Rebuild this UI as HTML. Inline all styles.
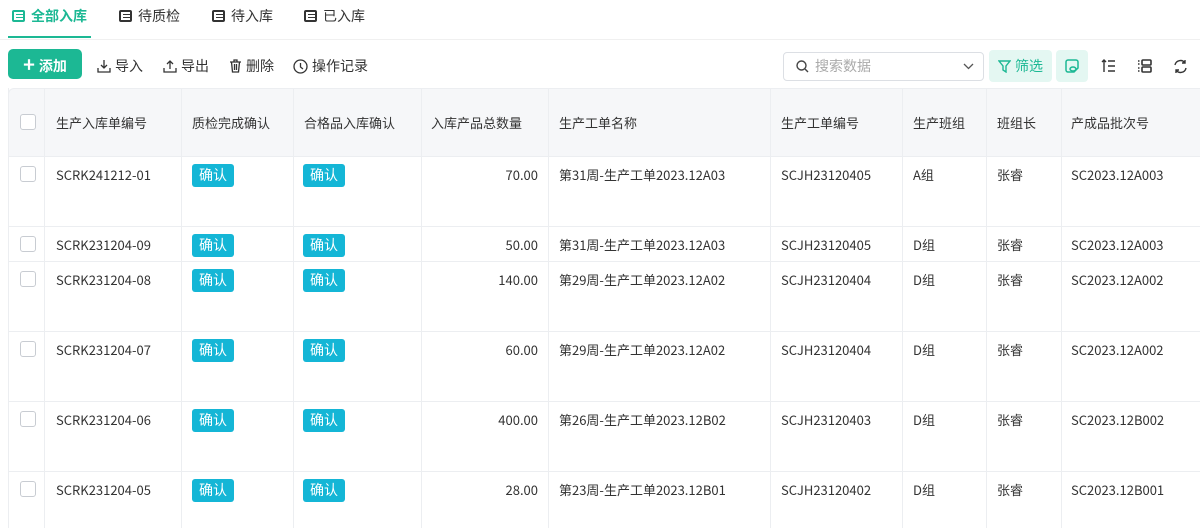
<!DOCTYPE html>
<html><head><meta charset="utf-8"><style>
*{margin:0;padding:0;box-sizing:border-box}
body{width:1200px;height:528px;overflow:hidden;background:#fff;font-family:"Noto Sans CJK SC","Liberation Sans",sans-serif;color:#333;font-size:13px;position:relative}
.a{position:absolute}
.tab{position:absolute;top:6px;font-size:14px;line-height:20px;color:#333;display:flex;align-items:center;gap:6px}
.ti{width:13px;height:12px;border:2px solid #333;border-radius:2px;position:relative;color:#333}
.ti:before{content:"";position:absolute;left:2px;right:0;top:1.5px;height:1.5px;background:currentColor;box-shadow:0 3px 0 currentColor}
.tb{position:absolute;top:56px;font-size:14px;line-height:20px;color:#333;display:flex;align-items:center;gap:4px}
.cell{position:absolute;font-size:13px;line-height:18px;color:#333}
.badge{position:absolute;background:#14b6d6;color:#fff;font-size:14px;border-radius:3px;width:42px;height:23px;line-height:23px;text-align:center}
.cb{position:absolute;left:20px;width:16px;height:16px;border:1px solid #c8ccd2;border-radius:3px;background:#fff}
.vl{position:absolute;width:1px;background:#eceef1}
.hl{position:absolute;left:8px;right:0;height:1px;background:#eceef1}
</style></head><body>
<div class="tab" style="left:12px;color:#1cb894;font-weight:bold"><span class="ti" style="border-color:#1cb894;color:#1cb894"></span>全部入库</div>
<div class="tab" style="left:119px"><span class="ti"></span>待质检</div>
<div class="tab" style="left:212px"><span class="ti"></span>待入库</div>
<div class="tab" style="left:304px"><span class="ti"></span>已入库</div>
<div class="a" style="left:8px;top:36px;width:83px;height:2px;background:#1cb894"></div>
<div class="a" style="left:0;top:39px;width:1200px;height:1px;background:#f0f0f0"></div>

<div class="a" style="left:8px;top:49px;width:74px;height:30px;background:#1cb894;border-radius:5px;color:#fff;font-size:14px;line-height:30px;text-align:center;font-weight:bold"><span style="font-size:20px;vertical-align:-1px;margin-right:4px">+</span>添加</div>
<div class="tb" style="left:97px"><svg width="14" height="14" viewBox="0 0 14 14" fill="none" stroke="#333" stroke-width="1.3"><path d="M7 1v8M4 6l3 3 3-3M1 9v4h12V9"/></svg>导入</div>
<div class="tb" style="left:163px"><svg width="14" height="14" viewBox="0 0 14 14" fill="none" stroke="#333" stroke-width="1.3"><path d="M7 10V2M4 5l3-3 3 3M1 9v4h12V9"/></svg>导出</div>
<div class="tb" style="left:229px"><svg width="13" height="14" viewBox="0 0 13 14" fill="none" stroke="#333" stroke-width="1.3"><path d="M1 3h11M5 3V1h3v2M2.5 3l1 10h6l1-10M5.5 5v6M7.5 5v6"/></svg>删除</div>
<div class="tb" style="left:293px"><svg width="15" height="15" viewBox="0 0 15 15" fill="none" stroke="#333" stroke-width="1.3"><circle cx="7.5" cy="7.5" r="6.5"/><path d="M7.5 4v4l2.5 2"/></svg>操作记录</div>

<div class="a" style="left:783px;top:52px;width:201px;height:29px;border:1px solid #dcdfe4;border-radius:4px"></div>
<svg class="a" style="left:796px;top:60px" width="13" height="13" viewBox="0 0 13 13" fill="none" stroke="#444" stroke-width="1.4"><circle cx="5.5" cy="5.5" r="4.5"/><path d="M9 9l3 3"/></svg>
<div class="a" style="left:815px;top:56px;font-size:14px;line-height:20px;color:#aaa">搜索数据</div>
<svg class="a" style="left:963px;top:63px" width="11" height="7" viewBox="0 0 11 7" fill="none" stroke="#555" stroke-width="1.3"><path d="M1 1l4.5 4.5L10 1"/></svg>
<div class="a" style="left:989px;top:50px;width:63px;height:32px;background:#e4f7f2;border-radius:4px;color:#1cb894;font-size:14px;line-height:32px;padding-left:26px">筛选</div>
<svg class="a" style="left:998px;top:60px" width="13" height="13" viewBox="0 0 13 13" fill="none" stroke="#1cb894" stroke-width="1.4"><path d="M1 1h11L8 6v6L5 10V6z"/></svg>
<div class="a" style="left:1056px;top:50px;width:32px;height:32px;background:#e4f7f2;border-radius:4px"></div>
<svg class="a" style="left:1065px;top:59px" width="14" height="14" viewBox="0 0 14 14" fill="none" stroke="#1cb894" stroke-width="1.5"><path d="M3 1h8a2 2 0 0 1 2 2v6l-4 4H3a2 2 0 0 1-2-2V3a2 2 0 0 1 2-2z"/><ellipse cx="8" cy="10" rx="3" ry="2"/></svg>
<svg class="a" style="left:1101px;top:59px" width="15" height="14" viewBox="0 0 15 14" fill="none" stroke="#333" stroke-width="1.4"><path d="M3 13V1M1 3l2-2 2 2M7 2h7M7 7h7M7 12h7"/></svg>
<svg class="a" style="left:1137px;top:59px" width="15" height="14" viewBox="0 0 15 14" fill="none" stroke="#333" stroke-width="1.6"><path d="M1 2h1.5M1 5h1.5M1 9h1.5M1 12h1.5"/><rect x="5" y="1" width="9" height="5" rx="1"/><rect x="5" y="8" width="9" height="5" rx="1"/></svg>
<svg class="a" style="left:1173px;top:59px" width="15" height="15" viewBox="0 0 15 15" fill="none" stroke="#333" stroke-width="1.4"><path d="M2 6a5.5 5.5 0 0 1 10-2M13 9a5.5 5.5 0 0 1-10 2M12 1v3H9M3 14v-3h3"/></svg>

<div class="a" style="left:8px;top:88px;width:1200px;height:69px;background:#f6f7f9;border-top:1px solid #eceef1;border-left:1px solid #eceef1;border-radius:6px 0 0 0"></div>
<div class="vl" style="left:8px;top:88px;height:440px"></div>
<div class="vl" style="left:44px;top:88px;height:440px"></div>
<div class="vl" style="left:181px;top:88px;height:440px"></div>
<div class="vl" style="left:293px;top:88px;height:440px"></div>
<div class="vl" style="left:421px;top:88px;height:440px"></div>
<div class="vl" style="left:548px;top:88px;height:440px"></div>
<div class="vl" style="left:770px;top:88px;height:440px"></div>
<div class="vl" style="left:902px;top:88px;height:440px"></div>
<div class="vl" style="left:986px;top:88px;height:440px"></div>
<div class="vl" style="left:1061px;top:88px;height:440px"></div>
<div class="hl" style="top:156px"></div>
<div class="hl" style="top:226px"></div>
<div class="hl" style="top:261px"></div>
<div class="hl" style="top:331px"></div>
<div class="hl" style="top:401px"></div>
<div class="hl" style="top:471px"></div>

<div class="cb" style="top:114px"></div>
<div class="cell" style="left:56px;top:114px">生产入库单编号</div>
<div class="cell" style="left:192px;top:114px">质检完成确认</div>
<div class="cell" style="left:304px;top:114px">合格品入库确认</div>
<div class="cell" style="left:431px;top:114px">入库产品总数量</div>
<div class="cell" style="left:559px;top:114px">生产工单名称</div>
<div class="cell" style="left:781px;top:114px">生产工单编号</div>
<div class="cell" style="left:913px;top:114px">生产班组</div>
<div class="cell" style="left:997px;top:114px">班组长</div>
<div class="cell" style="left:1071px;top:114px">产成品批次号</div>

<div class="cb" style="top:166px"></div><div class="cell" style="left:56px;top:166px">SCRK241212-01</div><div class="badge" style="left:192px;top:164px">确认</div><div class="badge" style="left:303px;top:164px">确认</div><div class="cell" style="left:421px;width:117px;text-align:right;top:166px">70.00</div><div class="cell" style="left:559px;top:166px">第31周-生产工单2023.12A03</div><div class="cell" style="left:781px;top:166px">SCJH23120405</div><div class="cell" style="left:913px;top:166px">A组</div><div class="cell" style="left:997px;top:166px">张睿</div><div class="cell" style="left:1071px;top:166px">SC2023.12A003</div>

<div class="cb" style="top:236px"></div><div class="cell" style="left:56px;top:236px">SCRK231204-09</div><div class="badge" style="left:192px;top:234px">确认</div><div class="badge" style="left:303px;top:234px">确认</div><div class="cell" style="left:421px;width:117px;text-align:right;top:236px">50.00</div><div class="cell" style="left:559px;top:236px">第31周-生产工单2023.12A03</div><div class="cell" style="left:781px;top:236px">SCJH23120405</div><div class="cell" style="left:913px;top:236px">D组</div><div class="cell" style="left:997px;top:236px">张睿</div><div class="cell" style="left:1071px;top:236px">SC2023.12A003</div>

<div class="cb" style="top:271px"></div><div class="cell" style="left:56px;top:271px">SCRK231204-08</div><div class="badge" style="left:192px;top:269px">确认</div><div class="badge" style="left:303px;top:269px">确认</div><div class="cell" style="left:421px;width:117px;text-align:right;top:271px">140.00</div><div class="cell" style="left:559px;top:271px">第29周-生产工单2023.12A02</div><div class="cell" style="left:781px;top:271px">SCJH23120404</div><div class="cell" style="left:913px;top:271px">D组</div><div class="cell" style="left:997px;top:271px">张睿</div><div class="cell" style="left:1071px;top:271px">SC2023.12A002</div>

<div class="cb" style="top:341px"></div><div class="cell" style="left:56px;top:341px">SCRK231204-07</div><div class="badge" style="left:192px;top:339px">确认</div><div class="badge" style="left:303px;top:339px">确认</div><div class="cell" style="left:421px;width:117px;text-align:right;top:341px">60.00</div><div class="cell" style="left:559px;top:341px">第29周-生产工单2023.12A02</div><div class="cell" style="left:781px;top:341px">SCJH23120404</div><div class="cell" style="left:913px;top:341px">D组</div><div class="cell" style="left:997px;top:341px">张睿</div><div class="cell" style="left:1071px;top:341px">SC2023.12A002</div>

<div class="cb" style="top:411px"></div><div class="cell" style="left:56px;top:411px">SCRK231204-06</div><div class="badge" style="left:192px;top:409px">确认</div><div class="badge" style="left:303px;top:409px">确认</div><div class="cell" style="left:421px;width:117px;text-align:right;top:411px">400.00</div><div class="cell" style="left:559px;top:411px">第26周-生产工单2023.12B02</div><div class="cell" style="left:781px;top:411px">SCJH23120403</div><div class="cell" style="left:913px;top:411px">D组</div><div class="cell" style="left:997px;top:411px">张睿</div><div class="cell" style="left:1071px;top:411px">SC2023.12B002</div>

<div class="cb" style="top:481px"></div><div class="cell" style="left:56px;top:481px">SCRK231204-05</div><div class="badge" style="left:192px;top:479px">确认</div><div class="badge" style="left:303px;top:479px">确认</div><div class="cell" style="left:421px;width:117px;text-align:right;top:481px">28.00</div><div class="cell" style="left:559px;top:481px">第23周-生产工单2023.12B01</div><div class="cell" style="left:781px;top:481px">SCJH23120402</div><div class="cell" style="left:913px;top:481px">D组</div><div class="cell" style="left:997px;top:481px">张睿</div><div class="cell" style="left:1071px;top:481px">SC2023.12B001</div>
</body></html>
